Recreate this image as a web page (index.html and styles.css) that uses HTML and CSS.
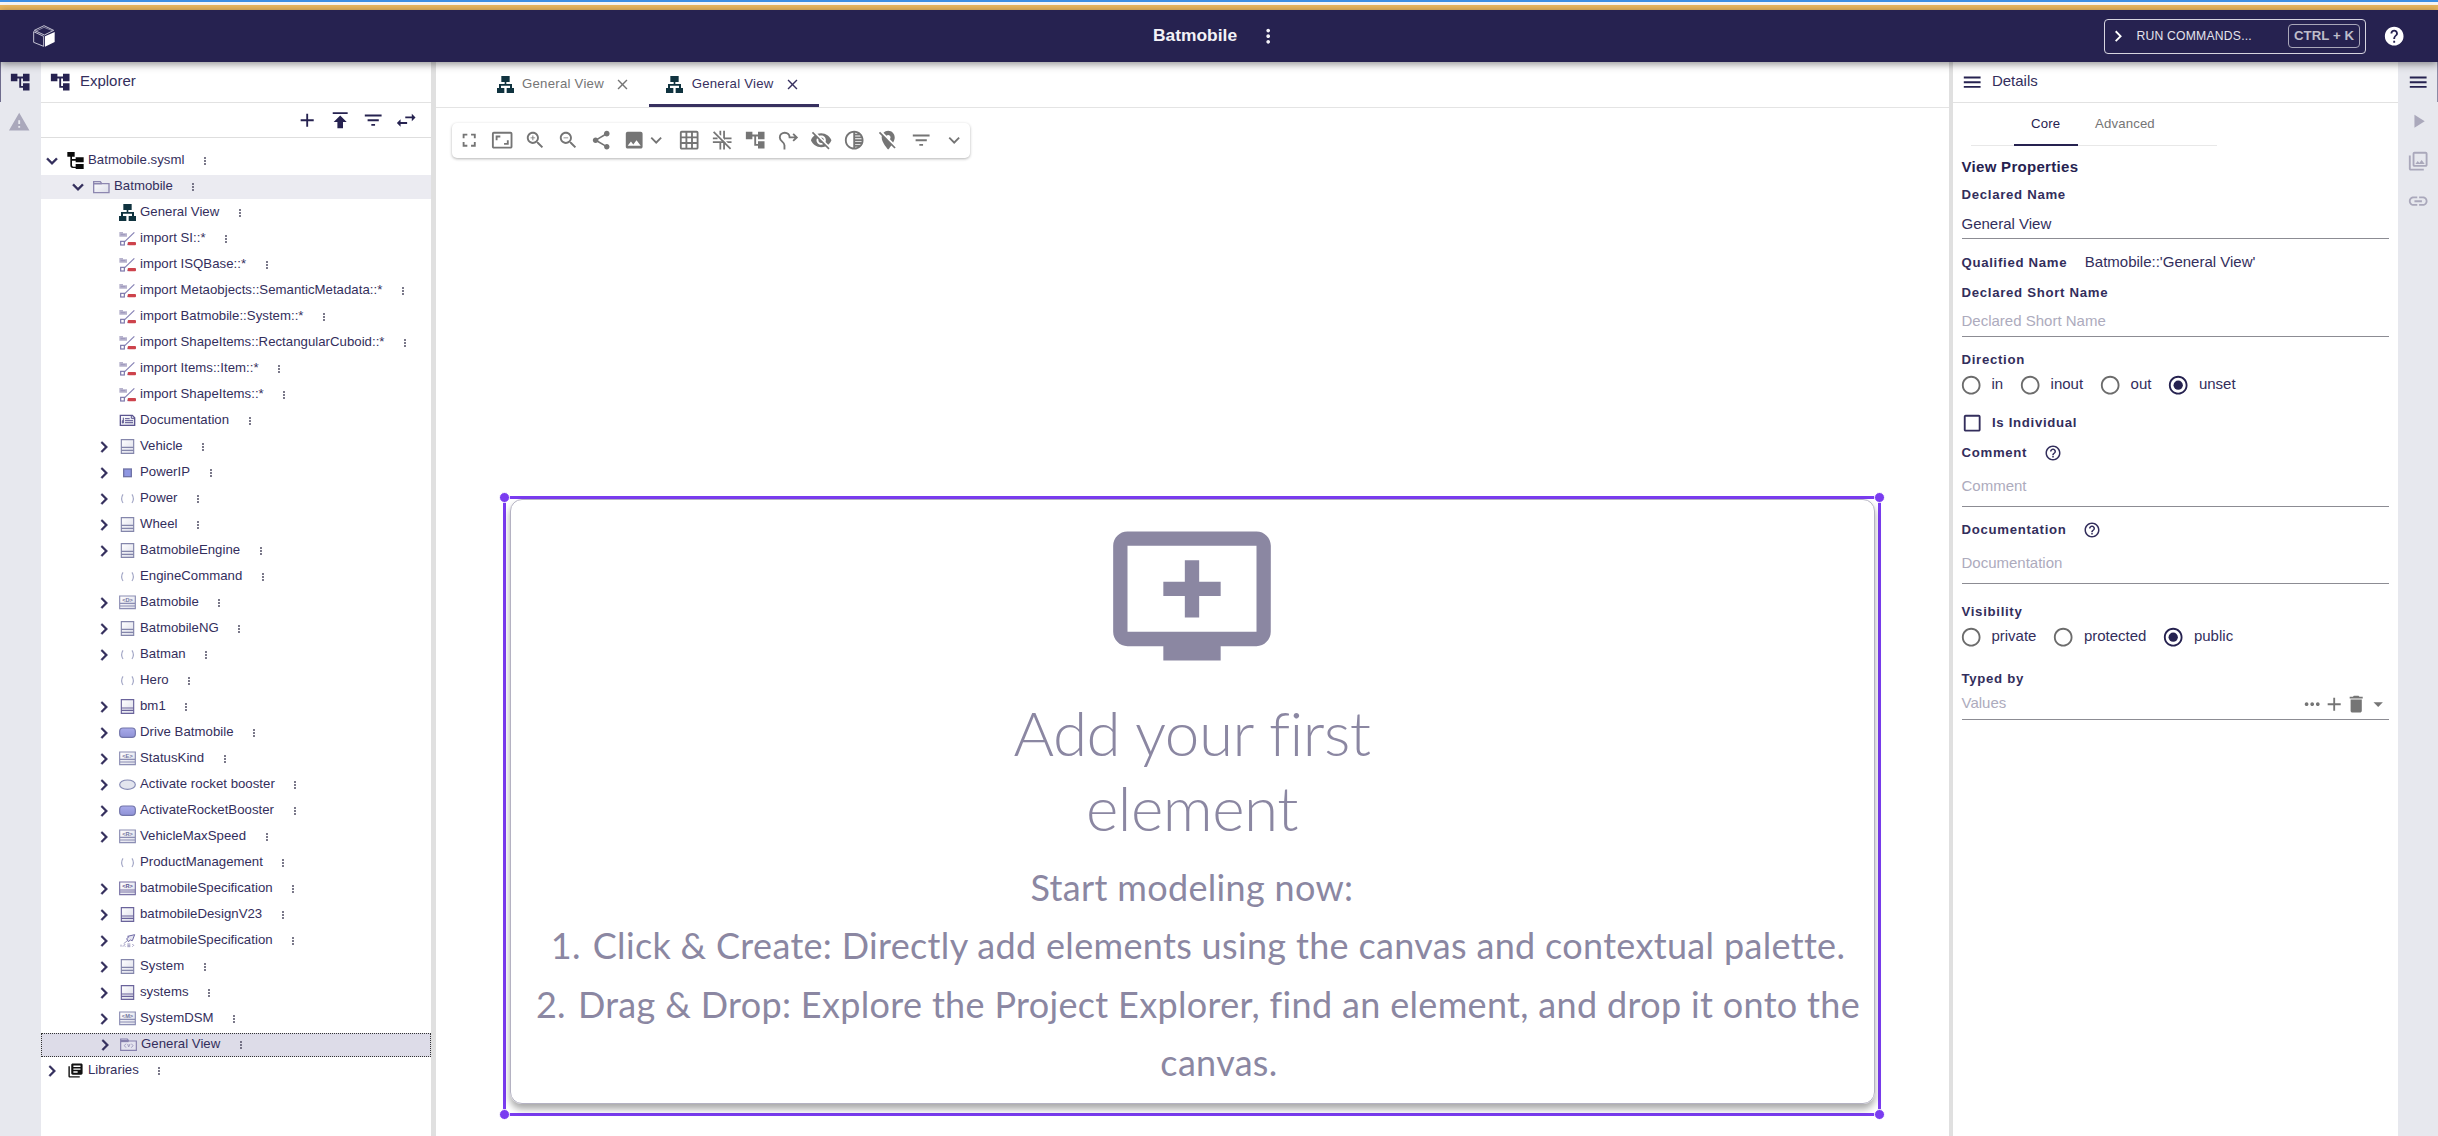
FILE: index.html
```html
<!DOCTYPE html>
<html lang="en">
<head>
<meta charset="utf-8">
<title>Batmobile</title>
<link rel="stylesheet" href="styles.css">
</head>
<body>
<svg class="sprite" aria-hidden="true">
  <defs>
    <linearGradient id="g-box" x1="0" y1="0" x2="1" y2="1"><stop offset="0" stop-color="#fff"/><stop offset="1" stop-color="#dcdde9"/></linearGradient>
    <linearGradient id="g-act" x1="0" y1="0" x2="0" y2="1"><stop offset="0" stop-color="#a9abea"/><stop offset="1" stop-color="#8f92d6"/></linearGradient>
    <symbol id="tree" viewBox="0 0 24 24"><path d="M22 11V3h-7v3H9V3H2v8h7V8h2v10h4v3h7v-8h-7v3h-2V8h2v3z"/></symbol>
    <symbol id="warn" viewBox="0 0 24 24"><path d="M1 21h22L12 2 1 21zm12-3h-2v-2h2v2zm0-4h-2v-4h2v4z"/></symbol>
    <symbol id="add" viewBox="0 0 24 24"><path d="M19 13h-6v6h-2v-6H5v-2h6V5h2v6h6v2z"/></symbol>
    <symbol id="publish" viewBox="0 0 24 24"><path d="M4 3.500v1.800h16V3.500zM5 14h4v6.500h6V14h4l-7-7z"/></symbol>
    <symbol id="filter" viewBox="0 0 24 24"><path d="M10 18h4v-2h-4v2zM3 6v2h18V6H3zm3 7h12v-2H6v2z"/></symbol>
    <symbol id="swap" viewBox="0 0 24 24"><path d="M5.990 11 2 15l3.990 4v-3H13v-2H5.990v-3zM22 9l-3.990-4v3H11v2h7.010v3L22 9z"/></symbol>
    <symbol id="down" viewBox="0 0 24 24"><path d="M16.590 8.590 12 13.170 7.410 8.590 6 10l6 6 6-6z"/></symbol>
    <symbol id="right" viewBox="0 0 24 24"><path d="M10 6 8.590 7.410 13.170 12l-4.580 4.590L10 18l6-6z"/></symbol>
    <symbol id="more" viewBox="0 0 24 24"><path d="M12 8c1.100 0 2-.9 2-2s-.9-2-2-2-2 .9-2 2 .9 2 2 2zm0 2c-1.100 0-2 .9-2 2s.9 2 2 2 2-.9 2-2-.9-2-2-2zm0 6c-1.100 0-2 .9-2 2s.9 2 2 2 2-.9 2-2-.9-2-2-2z"/></symbol>
    <symbol id="morehoriz" viewBox="0 0 24 24"><path d="M6 10c-1.100 0-2 .9-2 2s.9 2 2 2 2-.9 2-2-.9-2-2-2zm12 0c-1.100 0-2 .9-2 2s.9 2 2 2 2-.9 2-2-.9-2-2-2zm-6 0c-1.100 0-2 .9-2 2s.9 2 2 2 2-.9 2-2-.9-2-2-2z"/></symbol>
    <symbol id="close" viewBox="0 0 24 24"><path d="M19 6.410 17.590 5 12 10.590 6.410 5 5 6.410 10.590 12 5 17.590 6.410 19 12 13.410 17.590 19 19 17.590 13.410 12z"/></symbol>
    <symbol id="full" viewBox="0 0 24 24"><path d="M7 14H5v5h5v-2H7v-3zm-2-4h2V7h3V5H5v5zm12 7h-3v2h5v-5h-2v3zM14 5v2h3v3h2V5h-5z"/></symbol>
    <symbol id="aspect" viewBox="0 0 24 24"><path d="M19 12h-2v3h-3v2h5v-5zM7 9h3V7H5v5h2V9zm14-6H3c-1.100 0-2 .9-2 2v14c0 1.100.9 2 2 2h18c1.100 0 2-.9 2-2V5c0-1.100-.9-2-2-2zm0 16.010H3V4.990h18v14.020z"/></symbol>
    <symbol id="zin" viewBox="0 0 24 24"><path d="M15.500 14h-.79l-.28-.27C15.410 12.590 16 11.110 16 9.500 16 5.910 13.090 3 9.500 3S3 5.910 3 9.500 5.910 16 9.500 16c1.610 0 3.090-.59 4.230-1.570l.27.28v.79l5 4.990L20.490 19l-4.990-5zm-6 0C7.010 14 5 11.990 5 9.500S7.010 5 9.500 5 14 7.010 14 9.500 11.990 14 9.500 14zm2.500-4h-2v2H9v-2H7V9h2V7h1v2h2v1z"/></symbol>
    <symbol id="zout" viewBox="0 0 24 24"><path d="M15.500 14h-.79l-.28-.27C15.410 12.590 16 11.110 16 9.500 16 5.910 13.090 3 9.500 3S3 5.910 3 9.500 5.910 16 9.500 16c1.610 0 3.090-.59 4.230-1.570l.27.28v.79l5 4.990L20.490 19l-4.990-5zm-6 0C7.010 14 5 11.990 5 9.500S7.010 5 9.500 5 14 7.010 14 9.500 11.990 14 9.500 14zM7 9h5v1H7z"/></symbol>
    <symbol id="share" viewBox="0 0 24 24"><path d="M18 16.080c-.76 0-1.440.3-1.960.77L8.910 12.700c.05-.23.09-.46.09-.7s-.04-.47-.09-.7l7.050-4.110c.54.5 1.250.81 2.040.81 1.660 0 3-1.340 3-3s-1.340-3-3-3-3 1.340-3 3c0 .24.04.47.09.7L8.040 9.810C7.500 9.310 6.790 9 6 9c-1.660 0-3 1.340-3 3s1.340 3 3 3c.79 0 1.500-.31 2.040-.81l7.120 4.160c-.05.21-.08.43-.08.65 0 1.610 1.310 2.920 2.920 2.920s2.920-1.310 2.920-2.920-1.310-2.920-2.920-2.920z"/></symbol>
    <symbol id="image" viewBox="0 0 24 24"><path d="M21 19V5c0-1.100-.9-2-2-2H5c-1.100 0-2 .9-2 2v14c0 1.100.9 2 2 2h14c1.100 0 2-.9 2-2zM8.500 13.500l2.500 3.010L14.500 12l4.500 6H5l3.500-4.500z"/></symbol>
    <symbol id="grid" viewBox="0 0 24 24"><path d="M20 2H4c-1.100 0-2 .9-2 2v16c0 1.100.9 2 2 2h16c1.100 0 2-.9 2-2V4c0-1.100-.9-2-2-2zM8 20H4v-4h4v4zm0-6H4v-4h4v4zm0-6H4V4h4v4zm6 12h-4v-4h4v4zm0-6h-4v-4h4v4zm0-6h-4V4h4v4zm6 12h-4v-4h4v4zm0-6h-4v-4h4v4zm0-6h-4V4h4v4z"/></symbol>
    <symbol id="snapoff" viewBox="0 0 24 24"><path d="M10 2v5M14 2v20M2 14h20M2 10h5M13 10h9M10 13v9" fill="none" stroke="currentColor" stroke-width="1.900"/><path d="M4.200 2.200 22.200 20.200" stroke="#fff" stroke-width="1.600"/><path d="M2.800 3.200 21 21.400" stroke="currentColor" stroke-width="1.900"/></symbol>
    <symbol id="turn" viewBox="0 0 24 24"><path d="M8 22v-4.500C8 13.500 3 13.500 3 9c0-3 2.500-5 5.300-5 3 0 5.200 2 5.200 5H21M17.300 5.200 21.200 9l-3.900 3.800" fill="none" stroke="currentColor" stroke-width="2"/></symbol>
    <symbol id="eyeoff" viewBox="0 0 24 24"><path d="M12 7c2.760 0 5 2.240 5 5 0 .65-.13 1.260-.36 1.830l2.920 2.920c1.510-1.260 2.700-2.890 3.430-4.750-1.730-4.390-6-7.500-11-7.500-1.400 0-2.740.25-3.980.7l2.160 2.160C10.740 7.130 11.350 7 12 7zM2 4.270l2.280 2.280.46.46C3.080 8.300 1.780 10.020 1 12c1.730 4.390 6 7.500 11 7.500 1.550 0 3.030-.3 4.380-.84l.42.42L19.730 22 21 20.730 3.270 3 2 4.270zM7.530 9.800l1.550 1.550c-.05.21-.08.43-.08.65 0 1.660 1.340 3 3 3 .22 0 .44-.03.65-.08l1.550 1.550c-.67.33-1.410.53-2.200.53-2.760 0-5-2.240-5-5 0-.79.2-1.530.53-2.200zm4.310-.78 3.150 3.150.02-.16c0-1.660-1.340-3-3-3l-.17.01z"/></symbol>
    <symbol id="tone" viewBox="0 0 24 24"><path d="M12 2C6.480 2 2 6.480 2 12s4.480 10 10 10 10-4.480 10-10S17.520 2 12 2zm-1 17.930c-3.940-.49-7-3.850-7-7.930s3.050-7.440 7-7.930v15.860zm2-15.860c1.030.13 2 .45 2.870.93H13v-.93zM13 7h5.240c.25.31.48.65.68 1H13V7zm0 3h6.740c.08.33.15.66.19 1H13v-1zm0 9.930V19h2.870c-.87.48-1.840.8-2.870.93zM18.240 17H13v-1h5.920c-.2.35-.43.69-.68 1zm1.500-3H13v-1h6.930c-.04.34-.11.67-.19 1z"/></symbol>
    <symbol id="pinoff" viewBox="0 0 24 24"><path d="M12 6.500c1.380 0 2.500 1.120 2.500 2.500 0 .74-.33 1.390-.83 1.850l3.630 3.630c.98-1.860 1.700-3.800 1.700-5.480 0-3.870-3.130-7-7-7-1.980 0-3.760.83-5.040 2.150l3.190 3.190c.46-.52 1.110-.84 1.850-.84zm4.370 9.600-4.630-4.630-.11-.11L3.270 3 2 4.270l3.180 3.180C5.070 7.950 5 8.470 5 9c0 5.250 7 13 7 13s1.670-1.850 3.380-4.350L18.730 21 20 19.730l-3.630-3.630z"/></symbol>
    <symbol id="queue" viewBox="0 0 24 24"><path d="M21 3H3c-1.110 0-2 .89-2 2v12c0 1.100.89 2 2 2h5v2h8v-2h5c1.100 0 1.990-.9 1.990-2L23 5c0-1.110-.9-2-2-2zm0 14H3V5h18v12zm-5-7v2h-3v3h-2v-3H8v-2h3V7h2v3h3z"/></symbol>
    <symbol id="help" viewBox="0 0 24 24"><path d="M12 2C6.480 2 2 6.480 2 12s4.480 10 10 10 10-4.480 10-10S17.520 2 12 2zm1 17h-2v-2h2v2zm2.070-7.750-.9.920C13.450 12.900 13 13.500 13 15h-2v-.5c0-1.100.45-2.100 1.170-2.830l1.240-1.260c.37-.36.59-.86.59-1.410 0-1.100-.9-2-2-2s-2 .9-2 2H8c0-2.210 1.790-4 4-4s4 1.790 4 4c0 .88-.36 1.680-.93 2.250z"/></symbol>
    <symbol id="helpo" viewBox="0 0 24 24"><path d="M11 18h2v-2h-2v2zm1-16C6.480 2 2 6.480 2 12s4.480 10 10 10 10-4.480 10-10S17.520 2 12 2zm0 18c-4.410 0-8-3.590-8-8s3.590-8 8-8 8 3.590 8 8-3.590 8-8 8zm0-14c-2.210 0-4 1.790-4 4h2c0-1.100.9-2 2-2s2 .9 2 2c0 2-3 1.750-3 5h2c0-2.250 3-2.500 3-5 0-2.210-1.790-4-4-4z"/></symbol>
    <symbol id="menu" viewBox="0 0 24 24"><path d="M3 18h18v-2H3v2zm0-5h18v-2H3v2zm0-7v2h18V6H3z"/></symbol>
    <symbol id="play" viewBox="0 0 24 24"><path d="M8 5v14l11-7z"/></symbol>
    <symbol id="photos" viewBox="0 0 24 24"><path d="M20 4v12H8V4h12m0-2H8c-1.100 0-2 .9-2 2v12c0 1.100.9 2 2 2h12c1.100 0 2-.9 2-2V4c0-1.100-.9-2-2-2zm-8.500 9.670 1.690 2.260 2.480-3.100L19 15H9zM2 6v14c0 1.100.9 2 2 2h14v-2H4V6H2z"/></symbol>
    <symbol id="link" viewBox="0 0 24 24"><path d="M3.900 12c0-1.710 1.390-3.100 3.100-3.100h4V7H7c-2.760 0-5 2.240-5 5s2.240 5 5 5h4v-1.900H7c-1.710 0-3.100-1.390-3.100-3.100zM8 13h8v-2H8v2zm9-6h-4v1.900h4c1.710 0 3.100 1.390 3.100 3.100s-1.390 3.100-3.100 3.100h-4V17h4c2.760 0 5-2.240 5-5s-2.240-5-5-5z"/></symbol>
    <symbol id="radio" viewBox="0 0 24 24"><path d="M12 2C6.480 2 2 6.480 2 12s4.480 10 10 10 10-4.480 10-10S17.520 2 12 2zm0 18c-4.420 0-8-3.580-8-8s3.580-8 8-8 8 3.580 8 8-3.580 8-8 8z"/></symbol>
    <symbol id="radioon" viewBox="0 0 24 24"><path d="M12 2C6.480 2 2 6.480 2 12s4.480 10 10 10 10-4.480 10-10S17.520 2 12 2zm0 18c-4.420 0-8-3.580-8-8s3.580-8 8-8 8 3.580 8 8-3.580 8-8 8z"/><circle cx="12" cy="12" r="5"/></symbol>
    <symbol id="check" viewBox="0 0 24 24"><path d="M19 5v14H5V5h14m0-2H5c-1.100 0-2 .9-2 2v14c0 1.100.9 2 2 2h14c1.100 0 2-.9 2-2V5c0-1.100-.9-2-2-2z"/></symbol>
    <symbol id="trash" viewBox="0 0 24 24"><path d="M6 19c0 1.100.9 2 2 2h8c1.100 0 2-.9 2-2V7H6v12zM19 4h-3.500l-1-1h-5l-1 1H5v2h14V4z"/></symbol>
    <symbol id="caret" viewBox="0 0 24 24"><path d="m7 10 5 5 5-5z"/></symbol>
    <symbol id="cube" viewBox="0 0 66 66"><g fill="none" stroke="#dcdbe6" stroke-width="2.600" stroke-linejoin="round"><path d="M33 2 62 16 34 30 4 16z"/><path d="M2 20v32l30 12V34z"/><path d="M8 19 33 7l25 10" stroke-width="1.500"/></g><path d="M36 34 65 21v30L36 65z" fill="#fff"/></symbol>
    <symbol id="model" viewBox="0 0 51 51"><path d="M1 0h22v14H1zM26 16h24v15H26zM26 36h24v15H26zM10 14h5v26a4 4 0 0 0 4 4h8v4h-9a8 8 0 0 1-8-8zM12 21h15v5H12z" fill="#0a0a0a"/></symbol>
    <symbol id="package" viewBox="0 0 51 51"><path d="M2 44V11h20l4 6h22v27z" fill="url(#g-box)" stroke="#8d87b0" stroke-width="4"/><path d="M2 17h24" stroke="#8d87b0" stroke-width="5"/></symbol>
    <symbol id="diagram" viewBox="0 0 51 51"><path d="M13 0h25v18H13zM0 36h22v15H0zM29 36h22v15H29zM23 18h5v6h17v12h-6v-7H12v7H6V24h17z" fill="#10333f"/></symbol>
    <symbol id="import" viewBox="0 0 51 51"><path d="M1 6h11v4h12v10H1z" fill="#b7b3cd"/><path d="M5 14h14" stroke="#8f8ab3" stroke-width="2"/><path d="M46 7 14 38" stroke="#8581b5" stroke-width="3.500"/><rect x="5" y="34" width="11" height="11" fill="#fff" stroke="#7a75aa" stroke-width="3.500"/><path d="m30 35-6 11 10-3z" fill="#7a75aa"/><rect x="26" y="36" width="25" height="10" rx="3" fill="#cd434c"/></symbol>
    <symbol id="doc" viewBox="0 0 51 51"><path d="M4 10h36l7 7v23H4z" fill="url(#g-box)" stroke="#5b5590" stroke-width="4"/><path d="M13 17v16h-3v-7h3M18 20h14M18 26h24M18 32h24M37 11v8h9" fill="none" stroke="#5b5590" stroke-width="3"/></symbol>
    <symbol id="partdef" viewBox="0 0 51 51"><path d="M7 5h37v41H7zM7 28h37M7 37h37" fill="url(#g-box)" stroke="#8486ab" stroke-width="3.500"/></symbol>
    <symbol id="part" viewBox="0 0 51 51"><path d="M7 5h37v41H7zM7 30h37M7 37h37" fill="url(#g-box)" stroke="#6a639b" stroke-width="3.500"/></symbol>
    <symbol id="port" viewBox="0 0 51 51"><rect x="14" y="15" width="23" height="23" fill="#8f97e2" stroke="#7073a6" stroke-width="4"/></symbol>
    <symbol id="attr" viewBox="0 0 51 51"><path d="M12 13c-5 8-5 18 0 26M39 13c5 8 5 18 0 26" fill="none" stroke="#a3a7c6" stroke-width="3.500"/></symbol>
    <symbol id="kw" viewBox="0 0 51 51"><path d="M2 6h47v38H2zM2 28h47M2 36h47" fill="url(#g-box)" stroke="#8c8eb4" stroke-width="3.500"/></symbol>
    <symbol id="kwu" viewBox="0 0 51 51"><path d="M2 6h47v38H2zM2 30h47M2 36h47" fill="url(#g-box)" stroke="#7a73a6" stroke-width="3.500"/></symbol>
    <symbol id="action" viewBox="0 0 51 51"><rect x="2" y="12" width="47" height="28" rx="10" fill="url(#g-act)" stroke="#7275aa" stroke-width="3.500"/></symbol>
    <symbol id="usecase" viewBox="0 0 51 51"><ellipse cx="25.500" cy="26" rx="23.500" ry="14" fill="#e3e5ee" stroke="#858ab4" stroke-width="3.500"/></symbol>
    <symbol id="satisfy" viewBox="0 0 51 51"><path d="m47 8-7 18-6-2-6 5-5-9 6-5-3-2z" fill="#e6e6f1" stroke="#6d68a4" stroke-width="3"/><path d="m24 27-10 8M6 38v6M12 41v3M19 36l-4 4 4 4M25 36h9M25 40h9M25 44h9M40 36l4 4-4 4" fill="none" stroke="#8b87b4" stroke-width="2.500"/></symbol>
    <symbol id="view" viewBox="0 0 51 51"><path d="M2 43V9h20l4 6h23v28z" fill="#e4e3ef" stroke="#8680ad" stroke-width="3.500"/><path d="M2 15h24" stroke="#8680ad" stroke-width="7"/><path d="m18 23-5 6 5 6M34 23l5 6-5 6M23 24l3 9 4-9" fill="none" stroke="#a09cbf" stroke-width="3"/></symbol>
    <symbol id="books" viewBox="0 0 24 24"><path d="M4 6H2v14c0 1.100.9 2 2 2h14v-2H4V6zm16-4H8c-1.100 0-2 .9-2 2v12c0 1.100.9 2 2 2h12c1.100 0 2-.9 2-2V4c0-1.100-.9-2-2-2zm-1 9H9V9h10v2zm-4 4H9v-2h6v2zm4-8H9V5h10v2z"/></symbol>
  </defs>
</svg>

<div class="app">
  <div class="strip"></div>
  <header class="navbar">
    <svg class="logo"><use href="#cube"/></svg>
    <div class="title"><span>Batmobile</span><svg class="i22"><use href="#more"/></svg></div>
    <div class="nav-right">
      <div class="command"><svg class="i22"><use href="#right"/></svg><span class="run">RUN COMMANDS...</span><kbd>CTRL + K</kbd></div>
      <svg class="i22"><use href="#help"/></svg>
    </div>
  </header>

  <main class="workbench">
    <nav class="rail left">
      <div class="rail-item active"><svg class="i22"><use href="#tree"/></svg></div>
      <div class="rail-item"><svg class="i22"><use href="#warn"/></svg></div>
    </nav>

    <section class="explorer">
      <div class="panel-head"><svg class="i22"><use href="#tree"/></svg><span>Explorer</span></div>
      <div class="panel-tools">
        <svg class="i22"><use href="#add"/></svg><svg class="i22"><use href="#publish"/></svg><svg class="i22"><use href="#filter"/></svg><svg class="i22"><use href="#swap"/></svg>
      </div>
      <ul class="tree">
        <li><svg class="chev"><use href="#down"/></svg><svg class="ico"><use href="#model"/></svg><span>Batmobile.sysml</span><svg class="dots"><use href="#more"/></svg></li>
        <li class="l1 hover"><svg class="chev"><use href="#down"/></svg><svg class="ico"><use href="#package"/></svg><span>Batmobile</span><svg class="dots"><use href="#more"/></svg></li>
        <li class="l2"><i class="chev"></i><svg class="ico"><use href="#diagram"/></svg><span>General View</span><svg class="dots"><use href="#more"/></svg></li>
        <li class="l2"><i class="chev"></i><svg class="ico"><use href="#import"/></svg><span>import SI::*</span><svg class="dots"><use href="#more"/></svg></li>
        <li class="l2"><i class="chev"></i><svg class="ico"><use href="#import"/></svg><span>import ISQBase::*</span><svg class="dots"><use href="#more"/></svg></li>
        <li class="l2"><i class="chev"></i><svg class="ico"><use href="#import"/></svg><span>import Metaobjects::SemanticMetadata::*</span><svg class="dots"><use href="#more"/></svg></li>
        <li class="l2"><i class="chev"></i><svg class="ico"><use href="#import"/></svg><span>import Batmobile::System::*</span><svg class="dots"><use href="#more"/></svg></li>
        <li class="l2"><i class="chev"></i><svg class="ico"><use href="#import"/></svg><span>import ShapeItems::RectangularCuboid::*</span><svg class="dots"><use href="#more"/></svg></li>
        <li class="l2"><i class="chev"></i><svg class="ico"><use href="#import"/></svg><span>import Items::Item::*</span><svg class="dots"><use href="#more"/></svg></li>
        <li class="l2"><i class="chev"></i><svg class="ico"><use href="#import"/></svg><span>import ShapeItems::*</span><svg class="dots"><use href="#more"/></svg></li>
        <li class="l2"><i class="chev"></i><svg class="ico"><use href="#doc"/></svg><span>Documentation</span><svg class="dots"><use href="#more"/></svg></li>
        <li class="l2"><svg class="chev"><use href="#right"/></svg><svg class="ico"><use href="#partdef"/></svg><span>Vehicle</span><svg class="dots"><use href="#more"/></svg></li>
        <li class="l2"><svg class="chev"><use href="#right"/></svg><svg class="ico"><use href="#port"/></svg><span>PowerIP</span><svg class="dots"><use href="#more"/></svg></li>
        <li class="l2"><svg class="chev"><use href="#right"/></svg><svg class="ico"><use href="#attr"/></svg><span>Power</span><svg class="dots"><use href="#more"/></svg></li>
        <li class="l2"><svg class="chev"><use href="#right"/></svg><svg class="ico"><use href="#partdef"/></svg><span>Wheel</span><svg class="dots"><use href="#more"/></svg></li>
        <li class="l2"><svg class="chev"><use href="#right"/></svg><svg class="ico"><use href="#partdef"/></svg><span>BatmobileEngine</span><svg class="dots"><use href="#more"/></svg></li>
        <li class="l2"><i class="chev"></i><svg class="ico"><use href="#attr"/></svg><span>EngineCommand</span><svg class="dots"><use href="#more"/></svg></li>
        <li class="l2"><svg class="chev"><use href="#right"/></svg><svg class="ico" viewBox="0 0 51 51"><use href="#kw"/><text x="25.500" y="23">&lt;D&gt;</text></svg><span>Batmobile</span><svg class="dots"><use href="#more"/></svg></li>
        <li class="l2"><svg class="chev"><use href="#right"/></svg><svg class="ico"><use href="#partdef"/></svg><span>BatmobileNG</span><svg class="dots"><use href="#more"/></svg></li>
        <li class="l2"><svg class="chev"><use href="#right"/></svg><svg class="ico"><use href="#attr"/></svg><span>Batman</span><svg class="dots"><use href="#more"/></svg></li>
        <li class="l2"><i class="chev"></i><svg class="ico"><use href="#attr"/></svg><span>Hero</span><svg class="dots"><use href="#more"/></svg></li>
        <li class="l2"><svg class="chev"><use href="#right"/></svg><svg class="ico"><use href="#part"/></svg><span>bm1</span><svg class="dots"><use href="#more"/></svg></li>
        <li class="l2"><svg class="chev"><use href="#right"/></svg><svg class="ico"><use href="#action"/></svg><span>Drive Batmobile</span><svg class="dots"><use href="#more"/></svg></li>
        <li class="l2"><svg class="chev"><use href="#right"/></svg><svg class="ico" viewBox="0 0 51 51"><use href="#kw"/><text x="25.500" y="23">&lt;E&gt;</text></svg><span>StatusKind</span><svg class="dots"><use href="#more"/></svg></li>
        <li class="l2"><svg class="chev"><use href="#right"/></svg><svg class="ico"><use href="#usecase"/></svg><span>Activate rocket booster</span><svg class="dots"><use href="#more"/></svg></li>
        <li class="l2"><svg class="chev"><use href="#right"/></svg><svg class="ico"><use href="#action"/></svg><span>ActivateRocketBooster</span><svg class="dots"><use href="#more"/></svg></li>
        <li class="l2"><svg class="chev"><use href="#right"/></svg><svg class="ico" viewBox="0 0 51 51"><use href="#kw"/><text x="25.500" y="23">&lt;R&gt;</text></svg><span>VehicleMaxSpeed</span><svg class="dots"><use href="#more"/></svg></li>
        <li class="l2"><i class="chev"></i><svg class="ico"><use href="#attr"/></svg><span>ProductManagement</span><svg class="dots"><use href="#more"/></svg></li>
        <li class="l2"><svg class="chev"><use href="#right"/></svg><svg class="ico usage" viewBox="0 0 51 51"><use href="#kwu"/><text x="25.500" y="23">&lt;R&gt;</text></svg><span>batmobileSpecification</span><svg class="dots"><use href="#more"/></svg></li>
        <li class="l2"><svg class="chev"><use href="#right"/></svg><svg class="ico"><use href="#part"/></svg><span>batmobileDesignV23</span><svg class="dots"><use href="#more"/></svg></li>
        <li class="l2"><svg class="chev"><use href="#right"/></svg><svg class="ico"><use href="#satisfy"/></svg><span>batmobileSpecification</span><svg class="dots"><use href="#more"/></svg></li>
        <li class="l2"><svg class="chev"><use href="#right"/></svg><svg class="ico"><use href="#partdef"/></svg><span>System</span><svg class="dots"><use href="#more"/></svg></li>
        <li class="l2"><svg class="chev"><use href="#right"/></svg><svg class="ico"><use href="#part"/></svg><span>systems</span><svg class="dots"><use href="#more"/></svg></li>
        <li class="l2"><svg class="chev"><use href="#right"/></svg><svg class="ico" viewBox="0 0 51 51"><use href="#kw"/><text x="25.500" y="23">&lt;M&gt;</text></svg><span>SystemDSM</span><svg class="dots"><use href="#more"/></svg></li>
        <li class="l2 selected"><svg class="chev"><use href="#right"/></svg><svg class="ico"><use href="#view"/></svg><span>General View</span><svg class="dots"><use href="#more"/></svg></li>
        <li><svg class="chev"><use href="#right"/></svg><svg class="ico"><use href="#books"/></svg><span>Libraries</span><svg class="dots"><use href="#more"/></svg></li>
      </ul>
    </section>
    <div class="splitter s-left"></div>

    <section class="editor">
      <div class="tabs">
        <div class="tab"><svg class="ico"><use href="#diagram"/></svg><span>General View</span><svg class="x"><use href="#close"/></svg></div>
        <div class="tab current"><svg class="ico"><use href="#diagram"/></svg><span>General View</span><svg class="x"><use href="#close"/></svg></div>
      </div>
      <div class="canvas">
        <div class="toolbar">
          <svg><use href="#full"/></svg><svg><use href="#aspect"/></svg><svg><use href="#zin"/></svg><svg><use href="#zout"/></svg><svg><use href="#share"/></svg><svg><use href="#image"/></svg><svg class="drop"><use href="#down"/></svg><svg><use href="#grid"/></svg><svg><use href="#snapoff"/></svg><svg><use href="#tree"/></svg><svg><use href="#turn"/></svg><svg><use href="#eyeoff"/></svg><svg><use href="#tone"/></svg><svg><use href="#pinoff"/></svg><svg><use href="#filter"/></svg><svg><use href="#down"/></svg>
        </div>
        <div class="node">
          <div class="card">
            <svg class="big"><use href="#queue"/></svg>
            <h1>Add your first<br>element</h1>
            <p>Start modeling now:</p>
            <div class="steps">
              <div><b>1.</b>Click &amp; Create: Directly add elements using the canvas and contextual palette.</div>
              <div><b>2.</b>Drag &amp; Drop: Explore the Project Explorer, find an element, and drop it onto the<br>canvas.</div>
            </div>
          </div>
          <i class="handle tl"></i><i class="handle tr"></i><i class="handle bl"></i><i class="handle br"></i>
        </div>
      </div>
    </section>
    <div class="splitter s-right"></div>

    <section class="details">
      <div class="panel-head"><svg class="i22"><use href="#menu"/></svg><span>Details</span></div>
      <div class="dtabs"><span class="on">Core</span><span>Advanced</span></div>
      <form class="form">
        <h2>View Properties</h2>
        <label class="lb name">Declared Name</label>
        <div class="input v1">General View</div>
        <div class="pair"><label class="lb">Qualified Name</label><span>Batmobile::'General View'</span></div>
        <label class="lb short">Declared Short Name</label>
        <div class="input v2 ph">Declared Short Name</div>
        <label class="lb dir">Direction</label>
        <div class="radios direction">
          <svg><use href="#radio"/></svg><span>in</span><svg><use href="#radio"/></svg><span>inout</span><svg><use href="#radio"/></svg><span>out</span><svg class="on"><use href="#radioon"/></svg><span>unset</span>
        </div>
        <div class="check"><svg class="i22"><use href="#check"/></svg><label class="lb">Is Individual</label></div>
        <div class="lb with-help comment">Comment<svg><use href="#helpo"/></svg></div>
        <div class="input area ph">Comment</div>
        <div class="lb with-help docu">Documentation<svg><use href="#helpo"/></svg></div>
        <div class="input area ph">Documentation</div>
        <label class="lb vis">Visibility</label>
        <div class="radios">
          <svg><use href="#radio"/></svg><span>private</span><svg><use href="#radio"/></svg><span>protected</span><svg class="on"><use href="#radioon"/></svg><span>public</span>
        </div>
        <label class="lb typed">Typed by</label>
        <div class="input values ph"><span>Values</span><svg><use href="#morehoriz"/></svg><svg><use href="#add"/></svg><svg><use href="#trash"/></svg><svg><use href="#caret"/></svg></div>
      </form>
    </section>

    <nav class="rail right">
      <div class="rail-item active"><svg class="i22"><use href="#menu"/></svg></div>
      <div class="rail-item"><svg class="i22"><use href="#play"/></svg></div>
      <div class="rail-item"><svg class="i22"><use href="#photos"/></svg></div>
      <div class="rail-item"><svg class="i22"><use href="#link"/></svg></div>
    </nav>
  </main>
</div>
</body>
</html>
```

FILE: styles.css
```css
* { box-sizing: border-box; }
body { margin: 0; background: #fff; color: #332e5c; font-family: "Liberation Sans", Arial, sans-serif; font-size: 15px; }
svg { fill: currentColor; flex: none; display: block; overflow: visible; }
.sprite { position: absolute; width: 0; height: 0; }
.i22 { width: 22.4px; height: 22.4px; }

.app { display: flex; flex-direction: column; height: 1136px; overflow: hidden; }
.strip { height: 10px; background: linear-gradient(#3b8de3 0 2px, #f6f5f3 2px 5px, #e9b75f 5px 10px); flex: none; }
.navbar { height: 52px; flex: none; display: grid; grid-template-columns: 1fr auto 1fr; align-items: center; background: #262250; color: #fff; padding: 0 37px 0 33px; box-shadow: 0 2px 8px rgba(0, 0, 0, .45); z-index: 2; }
.logo { width: 22px; height: 22px; }
.title { display: flex; align-items: center; gap: 20px; font-weight: bold; font-size: 17.4px; color: #f3f2f7; }
.title span { margin-left: -1.5px; }
.nav-right { display: flex; align-items: center; justify-content: flex-end; gap: 16.5px; margin-right: -4px; }
.command { display: flex; align-items: center; width: 262px; height: 35px; border: 1px solid #d6d5df; border-radius: 4px; padding: 0 5px 0 2px; }
.run { font-size: 12.2px; letter-spacing: .2px; margin-left: 7px; flex: 1; color: #e4e3ec; }
.command kbd { font: bold 13.2px "Liberation Sans", Arial, sans-serif; border: 1px solid #a9a7b9; border-radius: 4px; height: 24px; line-height: 22px; width: 72px; text-align: center; color: #bebdca; letter-spacing: .1px; }

.workbench { flex: 1; display: flex; min-height: 0; }
.rail { width: 41px; flex: none; background: #e7e8ee; color: #aaa8bb; }
.rail.right { width: 40px; }
.rail.right svg { margin: -1px -1px 0 0; }
.rail.left svg { margin-left: -2px; }
.rail-item { height: 40px; display: flex; align-items: center; justify-content: center; }
.rail-item.active { color: #262250; border-left: 1px solid #6f6c8d; }
.rail.right .active { border-left: 0; border-right: 1px solid #8c8aa5; }
.rail.right .active svg { margin-top: 1px; }

.explorer { width: 390px; flex: none; }
.panel-head { height: 41px; border-bottom: 1px solid #e2e2e2; display: flex; align-items: center; padding: 0 8px; font-size: 15px; gap: 8.5px; }
.panel-head svg { color: #262250; }
.panel-head span { line-height: 20px; margin-top: -3px; }
.panel-tools { height: 35px; border-bottom: 1px solid #dedede; display: flex; align-items: center; justify-content: flex-end; gap: 10.6px; padding-right: 14px; color: #262250; }
.tree { list-style: none; margin: 10.6px 0 0; padding: 0; }
.tree li { height: 24px; margin-bottom: 2px; display: flex; align-items: center; font-size: 13.2px; letter-spacing: .03px; }
.tree span { white-space: nowrap; line-height: 20px; margin-top: -2px; }
.tree .l1 { padding-left: 26px; }
.tree .l2 { padding-left: 52px; }
.tree .hover { background: #ebebf1; }
.tree .selected { background: #dddce8; outline: 1px dotted #333; outline-offset: -1px; padding-left: 53px; }
.chev { width: 22px; height: 22px; margin: 0 4.5px 0 -.5px; flex: none; stroke: currentColor; stroke-width: .5; }
.ico { width: 17px; height: 17px; margin-right: 4px; color: #111; }
.ico text { font: bold 17px "Liberation Sans", Arial, sans-serif; text-anchor: middle; fill: #74769f; }
.usage text { fill: #5b5490; }
.dots { width: 12px; height: 12px; margin-left: 14.5px; color: #5d5b70; }

.splitter { background: #e0e0e0; flex: none; }
.s-left { width: 5px; }
.s-right { width: 4px; }

.editor { flex: 1; min-width: 0; display: flex; flex-direction: column; }
.tabs { height: 46px; flex: none; border-bottom: 1px solid #e4e4e4; display: flex; padding-left: 43.5px; }
.tab { width: 169.7px; height: 45px; display: flex; align-items: center; padding-left: 17px; font-size: 13.2px; letter-spacing: .25px; color: #757575; }
.tab .ico { margin-right: 8.5px; }
.tab span { margin-top: -2px; width: 93px; white-space: nowrap; }
.tab .x { width: 17px; height: 17px; margin-left: -1px; }
.tab.current { color: #37305f; border-bottom: 3px solid #37305f; padding-top: 3px; }

.canvas { flex: 1; min-height: 0; padding: 15px 16px 0; }
.toolbar { width: 518px; height: 35px; display: flex; align-items: center; gap: 10.72px; padding-left: 5.5px; border-radius: 5px; box-shadow: 0 1px 3px rgba(0, 0, 0, .3); color: #757575; }
.toolbar svg { width: 22.4px; height: 22.4px; }
.toolbar .drop { margin-left: -11.4px; }
.node { position: relative; width: 1378px; height: 620px; margin: 338px 0 0 51px; border: 3px solid #7a3cf0; padding: 0 3.5px; }
.card { width: 1365px; height: 605px; border: 1.5px solid #b4b2c2; border-top-width: 1px; border-radius: 12px; box-shadow: 0 5px 7px rgba(0, 0, 0, .34); display: flex; flex-direction: column; align-items: center; color: #8b87a2; font-family: Lato, sans-serif; text-align: center; padding-top: 10px; }
.big { width: 172px; height: 172px; }
.card h1 { margin: 13px 0 12.5px; font-weight: 300; font-size: 62px; letter-spacing: -.5px; line-height: 75px; }
.card p { margin: 0; font-size: 36px; letter-spacing: .33px; line-height: 58.5px; }
.steps { padding-left: 54px; width: 100%; font-size: 36px; letter-spacing: .33px; line-height: 58.5px; white-space: nowrap; }
.steps b { display: inline-block; width: 42px; margin-left: -42px; font-weight: 400; text-align: left; }
.handle { position: absolute; width: 11px; height: 11px; border-radius: 50%; background: #7a3cf0; border: 1px solid #fff; }
.tl { left: -7px; top: -7px; }
.tr { right: -7px; top: -7px; }
.bl { left: -7px; bottom: -7px; }
.br { right: -7px; bottom: -7px; }

.details { width: 445px; flex: none; }
.dtabs { margin-left: 17.5px; width: 246.5px; height: 43px; border-bottom: 1.5px solid #e8e8e8; padding-left: 43px; display: flex; font-size: 13.2px; letter-spacing: .15px; color: #757575; }
.dtabs span { line-height: 41px; height: 43px; padding: 0 17.5px; }
.dtabs .on { color: #262250; border-bottom: 2.5px solid #262250; width: 64px; }
.form { padding: 11px 9px 0 8.5px; display: flex; flex-direction: column; }
h2 { margin: 0; font-size: 15px; line-height: 20px; letter-spacing: .3px; color: #262250; }
.lb { display: block; font-weight: bold; font-size: 13.2px; line-height: 20px; letter-spacing: .7px; }
.name { margin-top: 8px; }
.input { border-bottom: 1px solid #8c8c93; line-height: 20px; }
.ph { color: #adabbd; }
.v1 { margin-top: 9px; height: 25px; }
.pair { display: flex; margin-top: 13px; gap: 17.5px; line-height: 20px; }
.pair .lb { margin-top: 1px; }
.short { margin-top: 10px; }
.v2 { margin-top: 8px; height: 26px; }
.dir { margin-top: 13px; }
.radios { display: flex; align-items: center; height: 20px; margin-top: 5px; }
.radios svg { width: 22.4px; height: 22.4px; margin-left: -2px; color: #6c6c6c; }
.radios svg.on { color: #262250; }
.radios span { margin: -3px 17.6px 0 9.5px; }
.check { display: flex; align-items: center; gap: 8.5px; margin-top: 18px; height: 20px; }
.check svg { margin-left: -.5px; }
.with-help { display: flex; align-items: center; }
.with-help svg { width: 18px; height: 18px; margin-left: 16.5px; }
.comment { margin-top: 10px; }
.area { margin-top: 13px; height: 31px; }
.docu { margin-top: 13px; }
.vis { margin-top: 18px; }
.typed { margin-top: 22px; }
.values { display: flex; align-items: flex-start; margin-top: 4px; height: 27px; }
.values span { flex: 1; }
.values svg { width: 22.4px; height: 22.4px; color: #757575; margin-left: -.5px; }
```
